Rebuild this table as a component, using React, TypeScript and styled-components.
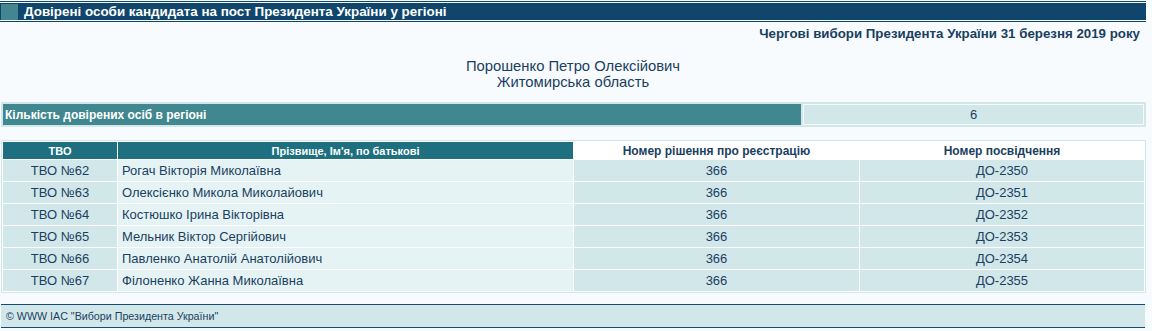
import styled, { createGlobalStyle } from 'styled-components';

const GlobalStyle = createGlobalStyle`
  body {
    margin: 0;
    background: #f7fbfd;
    font-family: 'Liberation Sans', Arial, sans-serif;
    color: #1a3f5f;
  }
`;

const rows = [
  { tvo: 'ТВО №62', name: 'Рогач Вікторія Миколаївна', decision: '366', cert: 'ДО-2350' },
  { tvo: 'ТВО №63', name: 'Олексієнко Микола Миколайович', decision: '366', cert: 'ДО-2351' },
  { tvo: 'ТВО №64', name: 'Костюшко Ірина Вікторівна', decision: '366', cert: 'ДО-2352' },
  { tvo: 'ТВО №65', name: 'Мельник Віктор Сергійович', decision: '366', cert: 'ДО-2353' },
  { tvo: 'ТВО №66', name: 'Павленко Анатолій Анатолійович', decision: '366', cert: 'ДО-2354' },
  { tvo: 'ТВО №67', name: 'Філоненко Жанна Миколаївна', decision: '366', cert: 'ДО-2355' },
];

const App = () => {
  return (
    <Page>
      <GlobalStyle />
      <TitleFrame>
        <TitleBand>
          <TitleSquare />
          <TitleText>Довірені особи кандидата на пост Президента України у регіоні</TitleText>
        </TitleBand>
      </TitleFrame>
      <Election>Чергові вибори Президента України 31 березня 2019 року</Election>
      <Candidate>
        <div>Порошенко Петро Олексійович</div>
        <div>Житомирська область</div>
      </Candidate>
      <CountTable>
        <tbody>
          <tr>
            <CountLabel>Кількість довірених осіб в регіоні</CountLabel>
            <CountValue>6</CountValue>
          </tr>
        </tbody>
      </CountTable>
      <DataTable>
        <thead>
          <tr>
            <HeadCell $dark style={{ width: 114 }}>ТВО</HeadCell>
            <HeadCell $dark style={{ width: 455 }}>Прізвище, Ім'я, по батькові</HeadCell>
            <HeadCell style={{ width: 285 }}>Номер рішення про реєстрацію</HeadCell>
            <HeadCell>Номер посвідчення</HeadCell>
          </tr>
        </thead>
        <tbody>
          {rows.map((r) => (
            <tr key={r.tvo}>
              <Cell $align='center'>{r.tvo}</Cell>
              <Cell $light>{r.name}</Cell>
              <Cell $align='center'>{r.decision}</Cell>
              <Cell $align='center'>{r.cert}</Cell>
            </tr>
          ))}
        </tbody>
      </DataTable>
      <Footer>© WWW IAC "Вибори Президента України"</Footer>
    </Page>
  );
};

export default App;

const Page = styled.div`
  width: 1146px;
  padding-top: 1px;
`;

const TitleFrame = styled.div`
  border-top: 1px solid #10466b;
  border-bottom: 1px solid #10466b;
  padding: 1px 0;
`;

const TitleBand = styled.div`
  display: flex;
  align-items: center;
  gap: 6px;
  height: 17px;
  padding-left: 1px;
  background: #10466b;
`;

const TitleSquare = styled.div`
  width: 17px;
  height: 16px;
  background: #43868f;
`;

const TitleText = styled.div`
  color: #ffffff;
  font-weight: bold;
  font-size: 13.4px;
  line-height: 17px;
`;

const Election = styled.div`
  text-align: right;
  font-weight: bold;
  font-size: 13.3px;
  padding: 4px 6px 0 0;
  height: 20px;
  color: #1a3f5f;
`;

const Candidate = styled.div`
  text-align: center;
  font-size: 14.8px;
  line-height: 16px;
  padding-top: 12px;
  height: 44px;
  color: #1a3f5f;
`;

const CountTable = styled.table`
  width: 1145px;
  border-collapse: separate;
  border-spacing: 2px;
  background: #d2e7ea;
  margin-left: 1px;
`;

const CountLabel = styled.td`
  width: 794px;
  background: #41878f;
  color: #ffffff;
  font-weight: bold;
  font-size: 12px;
  height: 21px;
  padding: 0 2px;
  text-align: left;
`;

const CountValue = styled.td`
  background: #d2e7ea;
  text-align: center;
  font-size: 13px;
  color: #1a3f5f;
  border: 1px solid #f7fbfd;
`;

const DataTable = styled.table`
  margin-top: 13px;
  margin-left: 1px;
  width: 1145px;
  border-collapse: separate;
  border-spacing: 1px;
  background: #ffffff;
  border: 1px solid #d2e7ea;
`;

const HeadCell = styled.th<{ $dark?: boolean }>`
  background: ${({ $dark }) => ($dark ? '#1e7080' : '#ffffff')};
  color: ${({ $dark }) => ($dark ? '#ffffff' : '#1a3f5f')};
  font-size: ${({ $dark }) => ($dark ? '11px' : '12px')};
  font-weight: bold;
  height: 17px;
  padding: 0;
  text-align: center;
`;

const Cell = styled.td<{ $light?: boolean; $align?: string }>`
  background: ${({ $light }) => ($light ? '#e6f3f4' : '#d2e7ea')};
  text-align: ${({ $align }) => $align || 'left'};
  font-size: 13px;
  height: 21px;
  padding: 0 ${({ $align }) => ($align ? '0' : '4px')};
  color: #1a3f5f;
`;

const Footer = styled.div`
  margin-top: 11px;
  margin-left: 1px;
  width: 1144px;
  height: 24px;
  line-height: 22px;
  background: #d2e7ea;
  border-top: 1px solid #1a4a6b;
  border-bottom: 1px solid #1a4a6b;
  font-size: 10.7px;
  padding-left: 5px;
  box-sizing: border-box;
  color: #1a3f5f;
`;
